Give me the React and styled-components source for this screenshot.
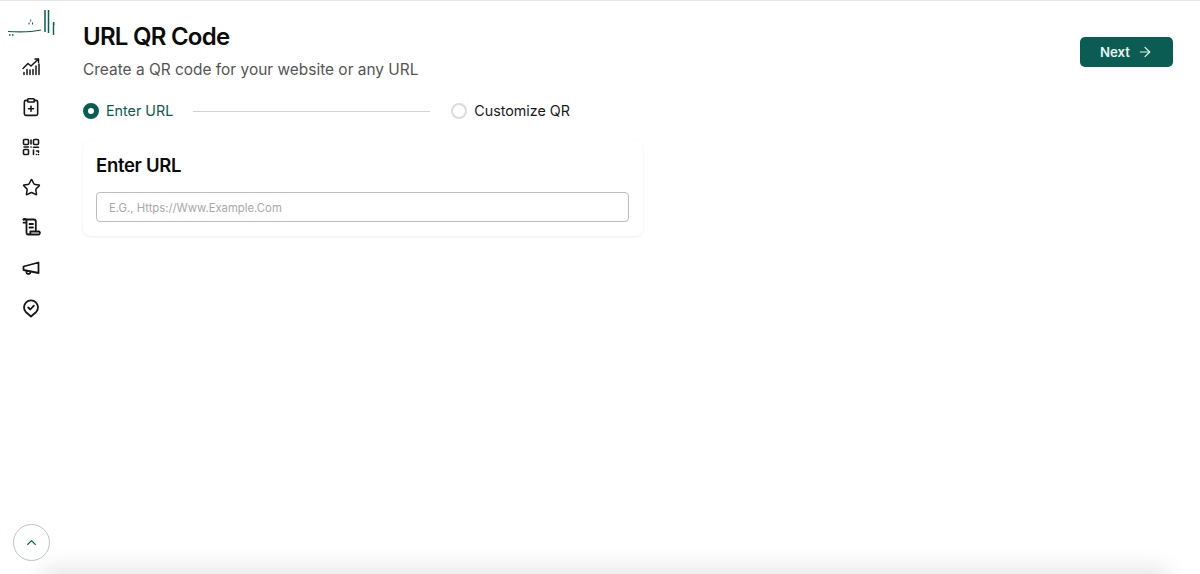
import styled, { createGlobalStyle } from "styled-components";
import { ArrowRight, ChevronUp, ClipboardPlus, Star } from "lucide-react";

const GlobalStyle = createGlobalStyle`
  * {
    box-sizing: border-box;
  }
  html,
  body {
    margin: 0;
    height: 100%;
    background: #fff;
    font-family: "Inter", "Liberation Sans", sans-serif;
    color: #0c0c0c;
    overflow: hidden;
  }
`;

const Page = styled.div`
  position: relative;
  display: flex;
  width: 100%;
  height: 574px;
  border-top: 1px solid #e6e6e6;
  overflow: hidden;
`;
const Sidebar = styled.aside`
  flex: 0 0 62px;
  display: flex;
  flex-direction: column;
  align-items: center;
  padding: 9px 0 12px;
`;
const Logo = styled.svg`
  display: block;
  width: 50px;
  height: 36px;
  margin-bottom: 11px;
  color: #0b5c52;
`;
const NavList = styled.nav`
  display: flex;
  flex-direction: column;
  align-items: center;
  gap: 20px;
  margin-bottom: auto;
`;
const NavIcon = styled.div`
  width: 20px;
  height: 20px;
  display: flex;
  align-items: center;
  justify-content: center;
  color: #161616;
`;
const CollapseButton = styled.button`
  width: 37px;
  height: 37px;
  padding: 0;
  margin-bottom: 1px;
  border-radius: 50%;
  border: 1px solid #b4c8c4;
  background: #fff;
  color: #0b5c52;
  display: flex;
  align-items: center;
  justify-content: center;
`;
const Main = styled.main`
  flex: 1;
  display: flex;
  flex-direction: column;
  align-items: flex-start;
  padding: 21px 27px 0 21px;
`;
const Header = styled.header`
  width: 100%;
  display: flex;
  justify-content: space-between;
  align-items: flex-start;
`;
const Title = styled.h1`
  margin: 0;
  font-size: 24px;
  line-height: 30px;
  font-weight: 600;
  letter-spacing: -0.75px;
  color: #0c0c0c;
`;
const Subtitle = styled.p`
  margin: 8px 0 0;
  font-size: 15.45px;
  line-height: 20px;
  font-weight: 400;
  color: #555;
`;
const NextButton = styled.button`
  width: 93px;
  height: 30px;
  margin-top: 15px;
  border: 0;
  border-radius: 5px;
  background: #0b5c52;
  color: #e9f2f0;
  font-family: inherit;
  font-size: 13.2px;
  font-weight: 600;
  display: flex;
  align-items: center;
  justify-content: center;
  gap: 7px;
`;
const Stepper = styled.div`
  display: flex;
  align-items: center;
  margin-top: 19px;
  height: 24px;
`;
const StepDot = styled.span`
  width: 16px;
  height: 16px;
  border-radius: 50%;
  border: ${(p) => (p.$active ? "5px solid #0b5c52" : "2px solid #dcdcdc")};
  background: #fff;
`;
const StepLabel = styled.span`
  margin-left: 7px;
  font-size: 14.3px;
  line-height: 20px;
  color: ${(p) => (p.$active ? "#0b5c52" : "#1a1a1a")};
`;
const StepLine = styled.span`
  width: 237px;
  height: 1px;
  margin: 0 21px 0 20px;
  background: #d2d2d2;
`;
const Card = styled.section`
  width: 560px;
  height: 96px;
  margin-top: 17px;
  padding: 13px 14px 0 13px;
  border-radius: 8px;
  background: #fff;
  box-shadow: 0 1px 3px rgba(0, 0, 0, 0.08);
`;
const CardTitle = styled.h2`
  margin: 0;
  font-size: 18.5px;
  line-height: 25px;
  font-weight: 600;
  letter-spacing: -0.3px;
  color: #0c0c0c;
`;
const UrlInput = styled.input`
  display: block;
  width: 100%;
  height: 30px;
  margin-top: 14px;
  padding: 1px 12px 0;
  border: 1px solid #bdbdbd;
  border-radius: 4px;
  outline: none;
  font-family: inherit;
  font-size: 11.3px;
  color: #333;
  &::placeholder {
    color: #a8a8a8;
    opacity: 1;
  }
`;
const BottomShade = styled.div`
  position: absolute;
  left: 50px;
  right: 40px;
  bottom: -14px;
  height: 10px;
  box-shadow: 0 -2px 22px 8px rgba(0, 0, 0, 0.1);
`;

const iconProps = {
  width: 20,
  height: 20,
  viewBox: "0 0 20 20",
  fill: "none",
  stroke: "currentColor",
  strokeWidth: 1.8,
  strokeLinecap: "round",
  strokeLinejoin: "round",
};

const ChartIcon = () => (
  <svg {...iconProps} strokeWidth={1.5}>
    <path d="M2 11.5 7 6.5l3 2.5 7.5-7M14 2h3.5v3.5" />
    <path d="M3 17.5v-2M6 17.5v-5M9 17.5v-4.5M12 17.5v-5M15 17.5V9M18 17.5V7" />
  </svg>
);
const QrIcon = () => (
  <svg {...iconProps} strokeWidth={1.6}>
    <rect x="2.5" y="2.5" width="5" height="5" rx="1" />
    <rect x="12.5" y="2.5" width="5" height="5" rx="1" />
    <rect x="2.5" y="12.5" width="5" height="5" rx="1" />
    <path d="M10 3v4M3 10h4.5M10 10h.1M12.5 10.2h5M12.5 13v4.5M15.5 14h2v1.2M15.5 17.5h.1M17.5 17.5h.1" />
  </svg>
);
const ScrollIcon = () => (
  <svg {...iconProps}>
    <path d="M2.5 2.5h10.3a2 2 0 0 1 2 2v9.5" />
    <path d="M2.5 2.5a1.7 1.7 0 0 1 3 1.2v2H2.5M5.5 4v11.5a2 2 0 0 0 2 2h9.3a1.7 1.7 0 0 0 1.4-3H9.4v1.3a1.7 1.7 0 0 1-1.7 1.7" />
    <path d="M8.5 7h3.5M8.5 10.5h3.5" />
  </svg>
);
const MegaphoneIcon = () => (
  <svg {...iconProps} style={{ marginTop: 2 }}>
    <path d="M17.5 4.5v10.5L2.5 12V8.5z" />
    <path d="M5.5 12.8v1.7a1.3 1.3 0 0 0 1.3 1.3H8a1.3 1.3 0 0 0 1.3-1.5l-.1-.6" />
  </svg>
);
const PinCheckIcon = () => (
  <svg {...iconProps} style={{ marginTop: 2 }}>
    <path d="M10 18.5 4.8 14a7 7 0 1 1 10.4 0z" />
    <path d="m7.2 9.5 2.1 2 3.6-3.8" />
  </svg>
);

export default function App() {
  return (
    <>
      <GlobalStyle />
      <Page>
        <Sidebar>
          <Logo viewBox="0 0 50 36" fill="none" stroke="currentColor" aria-hidden="true">
            <path d="M2 21.5c10 .6 24 .4 33-1.5" strokeWidth="1.2" />
            <path d="M39 0v22M42.5 0v23" strokeWidth="1.5" />
            <path d="M47.5 13v12" strokeWidth="1.4" />
            <path d="M47 13.5h1.4" strokeWidth="3" />
            <path d="M22.5 13.5h1M26 13.5h1M24.2 10.5h1" strokeWidth="2.2" />
            <path d="M3 25h1.5M6 25h1.5" strokeWidth="1.3" />
          </Logo>
          <NavList>
            <NavIcon><ChartIcon /></NavIcon>
            <NavIcon><ClipboardPlus size={20} strokeWidth={1.9} /></NavIcon>
            <NavIcon><QrIcon /></NavIcon>
            <NavIcon><Star size={19} strokeWidth={1.9} /></NavIcon>
            <NavIcon><ScrollIcon /></NavIcon>
            <NavIcon><MegaphoneIcon /></NavIcon>
            <NavIcon><PinCheckIcon /></NavIcon>
          </NavList>
          <CollapseButton type="button">
            <ChevronUp size={15} strokeWidth={2.2} />
          </CollapseButton>
        </Sidebar>
        <Main>
          <Header>
            <div>
              <Title>URL QR Code</Title>
              <Subtitle>Create a QR code for your website or any URL</Subtitle>
            </div>
            <NextButton type="button">
              Next
              <ArrowRight size={16} strokeWidth={1.8} />
            </NextButton>
          </Header>
          <Stepper>
            <StepDot $active />
            <StepLabel $active>Enter URL</StepLabel>
            <StepLine />
            <StepDot />
            <StepLabel>Customize QR</StepLabel>
          </Stepper>
          <Card>
            <CardTitle>Enter URL</CardTitle>
            <UrlInput placeholder="E.G., Https://Www.Example.Com" />
          </Card>
        </Main>
        <BottomShade />
      </Page>
    </>
  );
}
